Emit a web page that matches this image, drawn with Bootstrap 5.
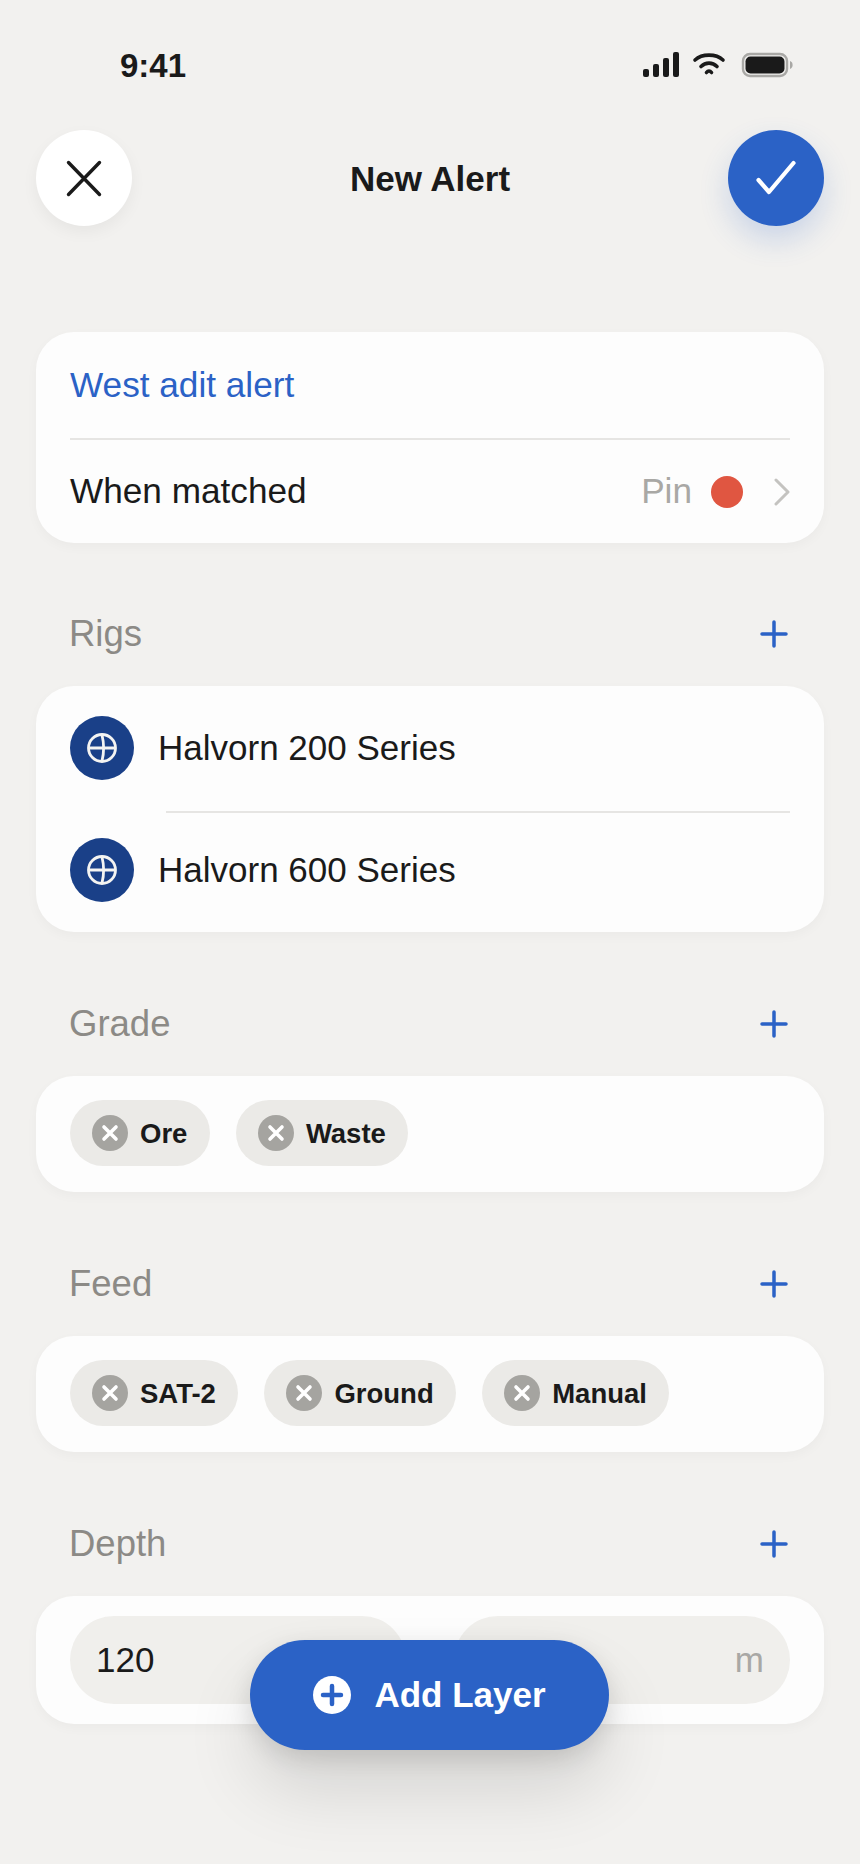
<!DOCTYPE html>
<html lang="en">
<head>
<meta charset="utf-8">
<title>New Alert</title>
<link href="https://cdn.jsdelivr.net/npm/bootstrap@5.3.0/dist/css/bootstrap.min.css" rel="stylesheet">
<style>
html,body{height:100%}
body{background:#f2f1ef;font-family:"Liberation Sans",Arial,sans-serif;color:#1a1a1a;overflow:hidden}
.screen{width:860px;height:1864px;padding:0 36px;position:relative;overflow:hidden}
.status-row{height:130px;padding:47px 30.500px 0 84px}
.clock{font-size:33px;font-weight:700;line-height:36px;padding-top:1px}
.head-row{height:96px}
.round-btn{width:96px;height:96px;padding:0;border:0;flex:none}
.btn-close-round{background:#fff;box-shadow:0 6px 16px rgba(0,0,0,.05)}
.btn-check-round{background:#2b62c6;box-shadow:0 14px 30px rgba(43,98,198,.2)}
.btn-close-round:hover,.btn-close-round:active{background:#fff}
.btn-check-round:hover,.btn-check-round:active{background:#2b62c6}
.page-title{font-size:35px;font-weight:700;margin:0;line-height:40px;padding-top:2px}
.panel{background:#fdfdfd;border:0;border-radius:38px;box-shadow:0 4px 12px rgba(0,0,0,.03)}
.panel-a{margin-top:106px;height:211px;padding:0 34px}
.name-row{height:108px;font-size:35.200px;color:#2b62c6;border-bottom:2px solid #e6e5e3}
.match-row{height:103px;font-size:35.200px}
.pin-label{color:#a9a8a5;margin-right:19px}
.pin-dot{width:32px;height:32px;background:#e05641;margin-right:31px}
.sec-head{height:96px;padding:0 36px 0 33px;margin-top:44px;margin-bottom:4px;color:#8c8a86}
.sec-first{margin-top:43px}
.sec-label{font-size:36.500px;line-height:40px}
.rig-row{height:114px;padding-left:34px}
.rig-row:first-child{height:124px}
.rig-icon{width:64px;height:64px;background:#1a4088;flex:none;margin-right:24px}
.rig-name{font-size:35px;padding-top:1px}
.rig-divider{height:2px;background:#e6e5e3;margin:1px 34px 0 130px}
.panel-rigs{height:246px}
.panel-chips{height:116px;padding:24px 34px 0;gap:26px}
.chip-pill{height:66px;background:#ebeae7;padding:0 22.500px 0 22px;gap:12px;font-size:27.500px;font-weight:700;flex:none}
.chip-x{width:36px;height:36px;background:#a5a4a0;flex:none}
.chip-txt{padding-top:2px}
.panel-depth{height:128px;padding:20px 34px;gap:48px}
.field-box{height:88px;flex:1 1 0;background:#f0efec;padding:0 26px;font-size:35px}
.unit{color:#a9a8a5}
.fab{position:absolute;left:250px;top:1640px;width:359px;height:110px;background:#2b62c6;color:#fff;border:0;font-size:35px;font-weight:700;gap:23px;box-shadow:0 8px 24px rgba(0,0,0,.12),0 40px 70px rgba(0,0,0,.12)}
.fab:hover,.fab:active{background:#2b62c6;color:#fff}
</style>
</head>
<body>
<div class="screen">
  <div class="status-row d-flex justify-content-between align-items-start">
    <span class="clock">9:41</span>
    <svg width="152" height="30" viewBox="0 0 152 30" class="mt-1" aria-hidden="true">
      <g fill="#1a1a1a">
        <rect x="1" y="18" width="6" height="8" rx="2"/>
        <rect x="11" y="13" width="6" height="13" rx="2"/>
        <rect x="21" y="7" width="6" height="19" rx="2"/>
        <rect x="31" y="1" width="6" height="25" rx="2"/>
      </g>
      <g fill="none" stroke="#1a1a1a" stroke-width="3.600" stroke-linecap="round">
        <path d="M53 9C60 2.500 74 2.500 81 9"/>
        <path d="M59 15.500C63.500 11 70.500 11 75 15.500"/>
        <path d="M64.500 21.500C66 19.500 68 19.500 69.500 21.500"/>
      </g>
      <rect x="101" y="3" width="44" height="22" rx="7" fill="none" stroke="#a9a8a5" stroke-width="2.400"/>
      <rect x="103.500" y="5.500" width="39" height="17" rx="5" fill="#1a1a1a"/>
      <path d="M148 10c2 .6 2.600 2.400 2.600 4s-.6 3.400-2.600 4z" fill="#a9a8a5"/>
    </svg>
  </div>

  <div class="head-row d-flex justify-content-between align-items-center">
    <button class="btn round-btn btn-close-round rounded-circle d-flex align-items-center justify-content-center" aria-label="Close">
      <svg width="40" height="40" viewBox="0 0 40 40" fill="none" stroke="#1a1a1a" stroke-width="3.400" stroke-linecap="round"><path d="M4.500 4.500 35.500 36.500M35.500 4.500 4.500 36.500"/></svg>
    </button>
    <h1 class="page-title">New Alert</h1>
    <button class="btn round-btn btn-check-round rounded-circle d-flex align-items-center justify-content-center" aria-label="Done">
      <svg width="44" height="40" viewBox="0 0 44 40" fill="none" stroke="#fff" stroke-width="4.200" stroke-linecap="round" stroke-linejoin="round"><path d="M4.500 22 15 34 39.500 5"/></svg>
    </button>
  </div>

  <div class="card panel panel-a">
    <div class="name-row d-flex align-items-center">West adit alert</div>
    <div class="match-row d-flex align-items-center">
      <span class="flex-grow-1">When matched</span>
      <span class="pin-label">Pin</span>
      <span class="pin-dot rounded-circle"></span>
      <svg width="16" height="28" viewBox="0 0 16 28" fill="none" stroke="#c4c3c0" stroke-width="3" stroke-linecap="round" stroke-linejoin="round"><path d="M2 2 14 14 2 26"/></svg>
    </div>
  </div>

  <div class="sec-head sec-first d-flex justify-content-between align-items-center">
    <span class="sec-label">Rigs</span>
    <svg width="28" height="28" viewBox="0 0 28 28" stroke="#2b62c6" stroke-width="3.500" stroke-linecap="round"><path d="M14 2V26M2 14H26"/></svg>
  </div>
  <div class="card panel panel-rigs">
    <div class="rig-row d-flex align-items-center">
      <span class="rig-icon rounded-circle d-flex align-items-center justify-content-center">
        <svg width="32" height="32" viewBox="0 0 32 32" fill="none" stroke="#f4f4f2" stroke-width="2.800"><circle cx="16" cy="16" r="13.500"/><path d="M3 16H29M16 3C18 11 18 21 16 29"/></svg>
      </span>
      <span class="rig-name">Halvorn 200 Series</span>
    </div>
    <div class="rig-divider"></div>
    <div class="rig-row d-flex align-items-center">
      <span class="rig-icon rounded-circle d-flex align-items-center justify-content-center">
        <svg width="32" height="32" viewBox="0 0 32 32" fill="none" stroke="#f4f4f2" stroke-width="2.800"><circle cx="16" cy="16" r="13.500"/><path d="M3 16H29M16 3C18 11 18 21 16 29"/></svg>
      </span>
      <span class="rig-name">Halvorn 600 Series</span>
    </div>
  </div>

  <div class="sec-head d-flex justify-content-between align-items-center">
    <span class="sec-label">Grade</span>
    <svg width="28" height="28" viewBox="0 0 28 28" stroke="#2b62c6" stroke-width="3.500" stroke-linecap="round"><path d="M14 2V26M2 14H26"/></svg>
  </div>
  <div class="card panel panel-chips flex-row align-items-start">
    <span class="chip-pill rounded-pill d-inline-flex align-items-center">
      <span class="chip-x rounded-circle d-flex align-items-center justify-content-center"><svg width="18" height="18" viewBox="0 0 18 18" stroke="#fff" stroke-width="3.600" stroke-linecap="round"><path d="M3 3 15 15M15 3 3 15"/></svg></span><span class="chip-txt">Ore</span>
    </span>
    <span class="chip-pill rounded-pill d-inline-flex align-items-center">
      <span class="chip-x rounded-circle d-flex align-items-center justify-content-center"><svg width="18" height="18" viewBox="0 0 18 18" stroke="#fff" stroke-width="3.600" stroke-linecap="round"><path d="M3 3 15 15M15 3 3 15"/></svg></span><span class="chip-txt">Waste</span>
    </span>
  </div>

  <div class="sec-head d-flex justify-content-between align-items-center">
    <span class="sec-label">Feed</span>
    <svg width="28" height="28" viewBox="0 0 28 28" stroke="#2b62c6" stroke-width="3.500" stroke-linecap="round"><path d="M14 2V26M2 14H26"/></svg>
  </div>
  <div class="card panel panel-chips flex-row align-items-start">
    <span class="chip-pill rounded-pill d-inline-flex align-items-center">
      <span class="chip-x rounded-circle d-flex align-items-center justify-content-center"><svg width="18" height="18" viewBox="0 0 18 18" stroke="#fff" stroke-width="3.600" stroke-linecap="round"><path d="M3 3 15 15M15 3 3 15"/></svg></span><span class="chip-txt">SAT-2</span>
    </span>
    <span class="chip-pill rounded-pill d-inline-flex align-items-center">
      <span class="chip-x rounded-circle d-flex align-items-center justify-content-center"><svg width="18" height="18" viewBox="0 0 18 18" stroke="#fff" stroke-width="3.600" stroke-linecap="round"><path d="M3 3 15 15M15 3 3 15"/></svg></span><span class="chip-txt">Ground</span>
    </span>
    <span class="chip-pill rounded-pill d-inline-flex align-items-center">
      <span class="chip-x rounded-circle d-flex align-items-center justify-content-center"><svg width="18" height="18" viewBox="0 0 18 18" stroke="#fff" stroke-width="3.600" stroke-linecap="round"><path d="M3 3 15 15M15 3 3 15"/></svg></span><span class="chip-txt">Manual</span>
    </span>
  </div>

  <div class="sec-head d-flex justify-content-between align-items-center">
    <span class="sec-label">Depth</span>
    <svg width="28" height="28" viewBox="0 0 28 28" stroke="#2b62c6" stroke-width="3.500" stroke-linecap="round"><path d="M14 2V26M2 14H26"/></svg>
  </div>
  <div class="card panel panel-depth flex-row">
    <div class="field-box rounded-pill d-flex align-items-center">120</div>
    <div class="field-box rounded-pill d-flex align-items-center justify-content-end"><span class="unit">m</span></div>
  </div>

  <button class="btn fab rounded-pill d-flex align-items-center justify-content-center">
    <svg width="38" height="38" viewBox="0 0 38 38"><circle cx="19" cy="19" r="19" fill="#fff"/><path d="M19 10V28M10 19H28" stroke="#2b62c6" stroke-width="4.500" stroke-linecap="round"/></svg>
    Add Layer
  </button>
</div>
<script src="https://cdn.jsdelivr.net/npm/bootstrap@5.3.0/dist/js/bootstrap.bundle.min.js"></script>
</body>
</html>
